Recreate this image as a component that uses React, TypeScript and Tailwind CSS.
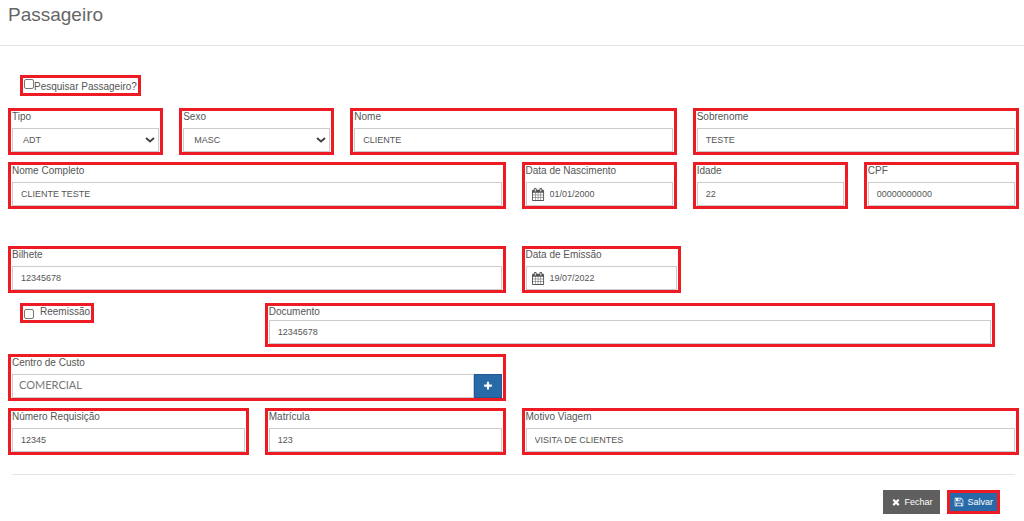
import React, { useState } from 'react';
import clsx from 'clsx';

const ICONS = {
  calendar:
    'M128 1664h288v-288h-288v288zm352 0h320v-288h-320v288zm-352-352h288v-320h-288v320zm352 0h320v-320h-320v320zm-352-384h288v-288h-288v288zm736 736h320v-288h-320v288zm-384-736h320v-288h-320v288zm768 736h288v-288h-288v288zm-384-352h320v-320h-320v320zm-352-864v-288q0-13-9.5-22.5t-22.5-9.5h-64q-13 0-22.5 9.5t-9.5 22.5v288q0 13 9.5 22.5t22.5 9.5h64q13 0 22.5-9.5t9.5-22.5zm736 864h288v-320h-288v320zm-384-384h320v-288h-320v288zm384 0h288v-288h-288v288zm32-480v-288q0-13-9.5-22.5t-22.5-9.5h-64q-13 0-22.5 9.5t-9.5 22.5v288q0 13 9.5 22.5t22.5 9.5h64q13 0 22.5-9.5t9.5-22.5zm384-64v1280q0 52-38 90t-90 38h-1408q-52 0-90-38t-38-90v-1280q0-52 38-90t90-38h128v-96q0-66 47-113t113-47h64q66 0 113 47t47 113v96h384v-96q0-66 47-113t113-47h64q66 0 113 47t47 113v96h128q52 0 90 38t38 90z',
  save: 'M512 1536h768v-384h-768v384zm896 0h128v-896q0-14-10-38.5t-20-34.5l-281-281q-10-10-34-20t-39-10v416q0 40-28 68t-68 28h-576q-40 0-68-28t-28-68v-416h-128v1280h128v-416q0-40 28-68t68-28h832q40 0 68 28t28 68v416zm-384-928v-320q0-13-9.5-22.5t-22.5-9.5h-192q-13 0-22.5 9.5t-9.5 22.5v320q0 13 9.5 22.5t22.5 9.5h192q13 0 22.5-9.5t9.5-22.5zm640 32v928q0 40-28 68t-68 28h-1344q-40 0-68-28t-28-68v-1344q0-40 28-68t68-28h928q40 0 88 20t76 48l280 280q28 28 48 76t20 88z',
  close:
    'M1490 1322q0 40-28 68l-136 136q-28 28-68 28t-68-28l-294-294-294 294q-28 28-68 28t-68-28l-136-136q-28-28-28-68t28-68l294-294-294-294q-28-28-28-68t28-68l136-136q28-28 68-28t68 28l294 294 294-294q28-28 68-28t68 28l136 136q28 28 28 68t-28 68l-294 294 294 294q28 28 28 68z',
  plus: 'M1600 736v192q0 40-28 68t-68 28h-416v416q0 40-28 68t-68 28h-192q-40 0-68-28t-28-68v-416h-416q-40 0-68-28t-28-68v-192q0-40 28-68t68-28h416v-416q0-40 28-68t68-28h192q40 0 68 28t28 68v416h416q40 0 68 28t28 68z',
};

const Icon: React.FC<{ name: keyof typeof ICONS; className: string }> = ({ name, className }) => (
  <svg viewBox="0 0 1792 1792" fill="currentColor" className={className} aria-hidden="true">
    <path d={ICONS[name]} />
  </svg>
);

interface FieldProps {
  id: string;
  label: string;
  className: string;
  compact?: boolean;
  children: React.ReactNode;
}

const Field: React.FC<FieldProps> = ({ id, label, className, compact, children }) => (
  <div className={clsx('border-3 border-[#ed1c24] px-px', className)}>
    <label
      htmlFor={id}
      className={clsx('block text-[10px] leading-3 text-[#555]', compact ? 'h-[14px]' : 'h-[17px]')}
    >
      {label}
    </label>
    {children}
  </div>
);

interface TextFieldProps {
  id: string;
  label: string;
  value: string;
  className: string;
  compact?: boolean;
}

const TextField: React.FC<TextFieldProps> = ({ id, label, value, className, compact }) => (
  <Field id={id} label={label} className={className} compact={compact}>
    <input
      id={id}
      type="text"
      defaultValue={value}
      className="block h-6 w-full border border-[#ccc] px-2 text-[9px] outline-none"
    />
  </Field>
);

const DateField: React.FC<TextFieldProps> = ({ id, label, value, className }) => (
  <Field id={id} label={label} className={className}>
    <div className="flex h-6 items-center border border-[#ccc] pl-[5px]">
      <Icon name="calendar" className="size-[13px] shrink-0" />
      <input
        id={id}
        type="text"
        defaultValue={value}
        className="h-full w-full min-w-0 pl-[5px] text-[9px] outline-none"
      />
    </div>
  </Field>
);

interface SelectFieldProps {
  id: string;
  label: string;
  options: string[];
  className: string;
}

const SelectField: React.FC<SelectFieldProps> = ({ id, label, options, className }) => (
  <Field id={id} label={label} className={className}>
    <div className="relative">
      <select
        id={id}
        className="block h-6 w-full appearance-none border border-[#ccc] bg-white px-2.5 pt-px text-[9px] outline-none"
      >
        {options.map((option) => (
          <option key={option}>{option}</option>
        ))}
      </select>
      <svg
        viewBox="0 0 10 6"
        fill="none"
        stroke="#444"
        strokeWidth={2}
        className="pointer-events-none absolute top-[9px] right-1 h-1.5 w-2.5"
      >
        <path d="M1 1l4 3.5L9 1" />
      </svg>
    </div>
  </Field>
);

const CHECKBOX = 'size-2.5 appearance-none rounded-xs border border-[#767676] bg-white checked:bg-[#286aa8]';
const ROW = 'grid grid-cols-12 items-start gap-x-4';

const App: React.FC = () => {
  const [search, setSearch] = useState(false);
  const [reissue, setReissue] = useState(false);

  return (
    <div className="bg-white font-['Liberation_Sans',Arial,sans-serif] text-[#555]">
      <header className="border-b border-[#e5e5e5] px-2 pt-[3px] pb-[18px]">
        <h1 className="text-[19px] leading-6 text-[#666]">Passageiro</h1>
      </header>

      <form className="pt-[29px] pr-[5px] pb-2 pl-2" onSubmit={(e) => e.preventDefault()}>
        <label className="ml-3 flex h-[21px] w-fit border-3 border-[#ed1c24] px-px text-[10px] leading-[17px]">
          <input
            type="checkbox"
            checked={search}
            onChange={(e) => setSearch(e.target.checked)}
            className={clsx(CHECKBOX, 'mt-px')}
          />
          Pesquisar Passageiro?
        </label>

        <div className={clsx(ROW, 'mt-3')}>
          <SelectField id="tipo" label="Tipo" options={['ADT', 'CHD', 'INF']} className="col-span-2" />
          <SelectField id="sexo" label="Sexo" options={['MASC', 'FEM']} className="col-span-2" />
          <TextField id="nome" label="Nome" value="CLIENTE" className="col-span-4" />
          <TextField id="sobrenome" label="Sobrenome" value="TESTE" className="col-span-4" />
        </div>

        <div className={clsx(ROW, 'mt-[7px]')}>
          <TextField id="nomeCompleto" label="Nome Completo" value="CLIENTE TESTE" className="col-span-6" />
          <DateField id="nascimento" label="Data de Nascimento" value="01/01/2000" className="col-span-2" />
          <TextField id="idade" label="Idade" value="22" className="col-span-2" />
          <TextField id="cpf" label="CPF" value="00000000000" className="col-span-2" />
        </div>

        <div className={clsx(ROW, 'mt-[37px]')}>
          <TextField id="bilhete" label="Bilhete" value="12345678" className="col-span-6" />
          <DateField id="emissao" label="Data de Emissão" value="19/07/2022" className="col-span-2 -mr-1" />
        </div>

        <div className={clsx(ROW, 'mt-2.5')}>
          <div className="col-span-3 pl-3">
            <label className="flex h-5 w-fit gap-1.5 border-3 border-[#ed1c24] px-px text-[10px] leading-3">
              <input
                type="checkbox"
                checked={reissue}
                onChange={(e) => setReissue(e.target.checked)}
                className={clsx(CHECKBOX, 'mt-[3px]')}
              />
              Reemissão
            </label>
          </div>
          <TextField id="documento" label="Documento" value="12345678" className="col-span-9 mr-6" compact />
        </div>

        <div className={clsx(ROW, 'mt-[7px]')}>
          <Field id="centroCusto" label="Centro de Custo" className="col-span-6">
            <div className="flex h-6">
              <input
                id="centroCusto"
                type="text"
                defaultValue="COMERCIAL"
                className="min-w-0 flex-1 border border-[#ccc] px-1.5 pb-0.5 font-[Lato,sans-serif] text-[11px] text-[#777] outline-none"
              />
              <button
                type="button"
                aria-label="Adicionar"
                className="flex w-7 items-center justify-center border border-[#1f5a94] bg-[#286aa8] text-white"
              >
                <Icon name="plus" className="size-2.5" />
              </button>
            </div>
          </Field>
        </div>

        <div className={clsx(ROW, 'mt-[7px]')}>
          <TextField id="requisicao" label="Número Requisição" value="12345" className="col-span-3" />
          <TextField id="matricula" label="Matrícula" value="123" className="col-span-3" />
          <TextField id="motivo" label="Motivo Viagem" value="VISITA DE CLIENTES" className="col-span-6" />
        </div>

        <hr className="mx-1 mt-[19px] border-[#e5e5e5]" />

        <div className="mt-[15px] flex justify-end gap-[7px] pr-[19px] text-[9px] leading-3 text-white">
          <button type="button" className="flex h-6 items-center gap-[3px] bg-[#5f5f5f] px-2">
            <Icon name="close" className="size-2.5" />
            Fechar
          </button>
          <button
            type="submit"
            className="flex h-6 items-center gap-[3px] border-3 border-[#ed1c24] bg-[#286aa8] px-1"
          >
            <Icon name="save" className="size-2.5" />
            Salvar
          </button>
        </div>
      </form>
    </div>
  );
};

export default App;
